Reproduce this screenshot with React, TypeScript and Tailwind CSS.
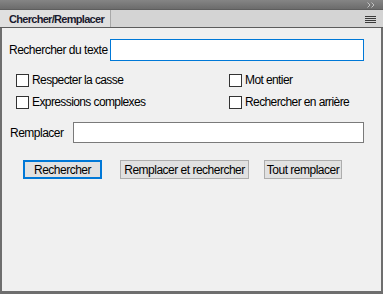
import React from "react";

function Check({ label }: { label: string }) {
  return (
    <div className="flex items-center h-[13px]">
      <div className="w-[13px] h-[13px] border border-[#333] bg-white box-border shrink-0" />
      <span className="ml-[3px] text-[12px] leading-[13px] text-black whitespace-nowrap tracking-[-0.6px]">{label}</span>
    </div>
  );
}

export default function App() {
  return (
    <div
      className="w-[383px] h-[294px] flex flex-col bg-[#f0f0f0]"
      style={{ fontFamily: '"Liberation Sans", Arial, sans-serif' }}
    >
      {/* top bar */}
      <div className="h-[10px] bg-gradient-to-b from-[#858585] to-[#6c6c6c] border-b border-[#5e5e5e] flex justify-end items-center pr-[7px]">
        <svg width="9" height="6" viewBox="0 0 9 6">
          <path d="M0.5 0.5 L3 3 L0.5 5.5 M4.5 0.5 L7 3 L4.5 5.5" stroke="#c4c4c4" fill="none" strokeWidth="1" />
        </svg>
      </div>
      {/* tab row */}
      <div className="h-[18px] bg-[#d4d4d4] border-b border-[#5c5c5c] flex items-stretch">
        <div className="w-[111px] bg-[#e0e0e0] border-r border-[#a8a8a8] flex items-center pl-[9px] pt-[2px]">
          <span className="text-[11px] font-bold text-[#1a1a2e] leading-none whitespace-nowrap tracking-[-0.7px]">Chercher/Remplacer</span>
        </div>
        <div className="flex-1" />
        <div className="flex flex-col justify-center gap-[1px] pr-[7px] pt-[1px]">
          <div className="w-[11px] h-[1px] bg-[#3a3a3a]" />
          <div className="w-[11px] h-[1px] bg-[#3a3a3a]" />
          <div className="w-[11px] h-[1px] bg-[#3a3a3a]" />
          <div className="w-[11px] h-[1px] bg-[#3a3a3a]" />
        </div>
      </div>
      {/* content */}
      <div className="flex-1 border-l-2 border-r-2 border-b-[3px] border-[#6e6e6e] bg-[#f0f0f0] flex flex-col pt-[11px] pl-[7px]">
        <div className="flex items-center h-[22px]">
          <span className="text-[12px] text-black w-[101px] whitespace-nowrap tracking-[-0.5px]">Rechercher du texte</span>
          <div className="w-[254px] h-[22px] border border-[#0078d7] bg-white" />
        </div>
        <div className="grid grid-cols-[213px_1fr] gap-y-[9px] mt-[13px] pl-[7px]">
          <Check label="Respecter la casse" />
          <Check label="Mot entier" />
          <Check label="Expressions complexes" />
          <Check label="Rechercher en arrière" />
        </div>
        <div className="flex items-center h-[21px] mt-[13px]">
          <span className="text-[12px] text-black w-[64px] pl-[1px] whitespace-nowrap tracking-[-0.5px]">Remplacer</span>
          <div className="w-[291px] h-[21px] border border-[#7a7a7a] bg-white" />
        </div>
        <div className="flex mt-[17px] pl-[14px] h-[19px]">
          <button className="w-[79px] h-[19px] border-2 border-[#0078d7] bg-[#e1e1e1] text-[12px] text-black leading-none whitespace-nowrap tracking-[-0.5px]">Rechercher</button>
          <button className="ml-[18px] w-[129px] h-[19px] border border-[#adadad] bg-[#e1e1e1] text-[12px] text-black leading-none whitespace-nowrap tracking-[-0.5px]">Remplacer et rechercher</button>
          <button className="ml-[15px] w-[78px] h-[19px] border border-[#adadad] bg-[#e1e1e1] text-[12px] text-black leading-none whitespace-nowrap tracking-[-0.5px]">Tout remplacer</button>
        </div>
      </div>
    </div>
  );
}
